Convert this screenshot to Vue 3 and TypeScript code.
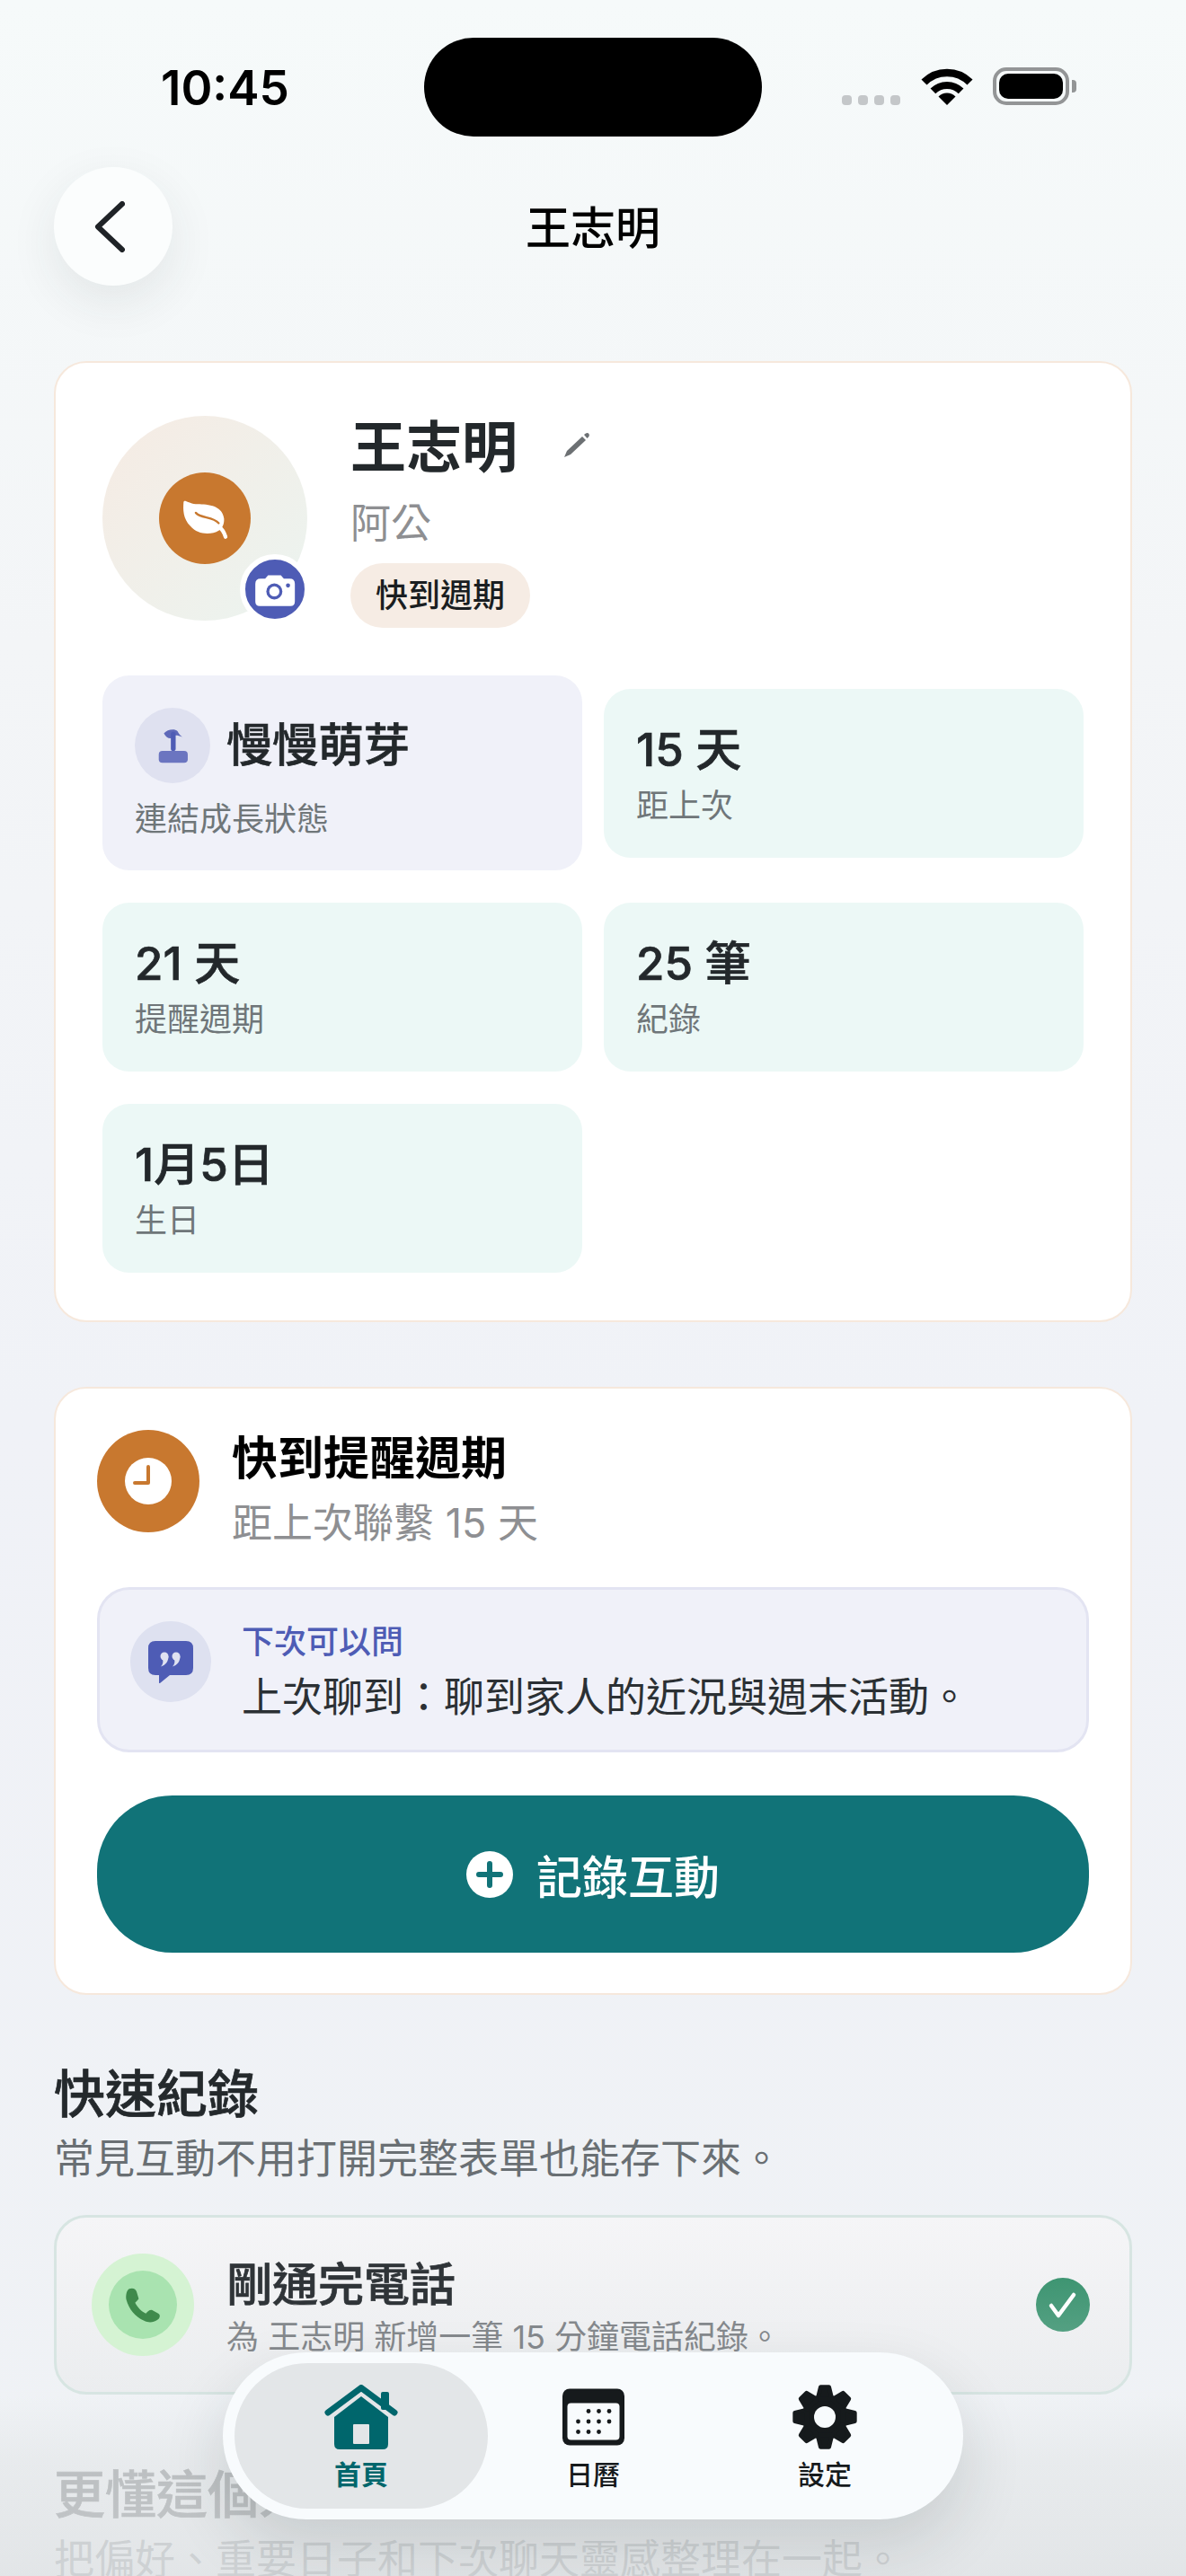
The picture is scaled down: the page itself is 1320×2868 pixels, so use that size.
<template>
  <div class="page">
    <div class="status">
      <span class="time">10:45</span>
      <div class="island"></div>
      <div class="status-right">
        <div class="dots"><i></i><i></i><i></i><i></i></div>
        <svg class="wifi" viewBox="0 0 58 42" fill="none" stroke="#000">
          <path d="M3.5 16.5A36 36 0 0 1 54.5 16.5" stroke-width="8.5" />
          <path d="M13.4 26.4A22 22 0 0 1 44.6 26.4" stroke-width="8" />
          <path d="M29 42L19.5 32.5A13.5 13.5 0 0 1 38.5 32.5Z" fill="#000" stroke="none" />
        </svg>
        <div class="battery"><div class="battery-fill"></div></div>
        <div class="battery-nub"></div>
      </div>
    </div>

    <header class="nav-head">
      <button class="back">
        <svg viewBox="0 0 34 57" width="34" height="57" fill="none" stroke="#1f2327" stroke-width="6" stroke-linecap="round" stroke-linejoin="round">
          <path d="M31 3L4 28.5L31 54" />
        </svg>
      </button>
      <h1 class="head-title">王志明</h1>
    </header>

    <main class="content">
      <section class="card profile">
        <div class="who">
          <div class="avatar">
            <div class="avatar-inner">
              <svg viewBox="60 70 160 140" width="53" height="47">
                <path d="M67 84C70 74 82 88 108 91C140 92 196 90 203 140C204 160 195 175 185 180C160 195 115 195 90 165C65 140 65 110 67 84Z" fill="#fff" />
                <path d="M108 120C125 140 165 132 185 155" fill="none" stroke="#c8782f" stroke-width="7" stroke-linecap="round" />
                <path d="M186 168C199 175 204 188 208 201" fill="none" stroke="#fff" stroke-width="13" stroke-linecap="round" />
              </svg>
            </div>
            <div class="camera">
              <svg viewBox="300 310 156 130" width="52" height="43">
                <path d="M330 338H345L355 327H398L408 338H428Q445 338 445 355V415Q445 430 430 430H327Q312 430 312 415V355Q312 338 330 338Z" fill="#fff" />
                <circle cx="376" cy="381" r="27" fill="#4e5cb5" />
                <circle cx="376" cy="381" r="17" fill="#fff" />
                <circle cx="422" cy="361" r="7" fill="#4e5cb5" />
              </svg>
            </div>
          </div>
          <div class="who-text">
            <div class="name-row">
              <span class="name">王志明</span>
              <svg class="pencil" viewBox="0 0 32 32" width="32" height="32" fill="none">
                <path d="M2 30L5 23L22 7L26 11L9 27Z" fill="#6c7073" />
                <path d="M24 5L26 3.5Q28 2.5 29.500 4Q30.500 6 29 7.500L27.500 9Z" fill="#6c7073" />
              </svg>
            </div>
            <div class="relation">阿公</div>
            <span class="pill">快到週期</span>
          </div>
        </div>

        <div class="stats">
          <div class="tile tile-growth">
            <div class="growth-row">
              <div class="growth-icon">
                <svg viewBox="100 120 110 125" width="37" height="42">
                  <path d="M125 142C135 130 160 125 170 135C175 145 180 150 186 154C175 150 165 148 160 150C150 165 135 160 125 142Z" fill="#5e69b9" />
                  <rect x="148" y="137" width="16" height="64" rx="8" fill="#4e5cb5" />
                  <rect x="108" y="200" width="96" height="40" rx="12" fill="#6b75c0" />
                </svg>
              </div>
              <span class="growth-title">慢慢萌芽</span>
            </div>
            <div class="tile-label">連結成長狀態</div>
          </div>
          <div v-for="s in stats" :key="s.label" class="tile">
            <div class="tile-value">{{ s.value }}</div>
            <div class="tile-label">{{ s.label }}</div>
          </div>
        </div>
      </section>

      <section class="card reminder">
        <div class="reminder-head">
          <div class="clock-circle">
            <svg viewBox="0 0 52 52" width="52" height="52">
              <circle cx="26" cy="26" r="26" fill="#fff" />
              <path d="M26 10V28H11" fill="none" stroke="#c8782f" stroke-width="4" stroke-linecap="round" stroke-linejoin="round" />
            </svg>
          </div>
          <div>
            <div class="reminder-title">快到提醒週期</div>
            <div class="reminder-sub">距上次聯繫 15 天</div>
          </div>
        </div>
        <div class="note">
          <div class="note-icon">
            <svg viewBox="0 0 50 47" width="50" height="47">
              <path d="M8 0H42Q50 0 50 8V30Q50 38 42 38H24L13 47Q12 47.500 12 46V38H8Q0 38 0 30V8Q0 0 8 0Z" fill="#4e5cb5" />
              <g fill="#dfe2f1">
                <circle cx="18" cy="17" r="4.500" />
                <circle cx="31" cy="17" r="4.500" />
                <path d="M22.500 17C22.500 23 19 27 14 28.500C16 26 17 24 16 20Z" />
                <path d="M35.500 17C35.500 23 32 27 27 28.500C29 26 30 24 29 20Z" />
              </g>
            </svg>
          </div>
          <div class="note-text">
            <div class="note-label">下次可以問</div>
            <div class="note-body">上次聊到：聊到家人的近況與週末活動。</div>
          </div>
        </div>
        <button class="log-btn">
          <svg viewBox="0 0 52 52" width="52" height="52">
            <circle cx="26" cy="26" r="26" fill="#fff" />
            <path d="M26 14V38M14 26H38" stroke="#117378" stroke-width="6" stroke-linecap="round" />
          </svg>
          <span>記錄互動</span>
        </button>
      </section>

      <section class="block">
        <h2 class="block-title">快速紀錄</h2>
        <p class="block-sub">常見互動不用打開完整表單也能存下來。</p>
        <div class="quick">
          <div class="phone-outer">
            <div class="phone-inner">
              <svg viewBox="110 135 135 130" width="45" height="43">
                <path d="M130 145C142 140 152 145 155 155L162 178C158 185 152 188 150 192C158 208 172 222 186 228C192 222 196 216 206 216L228 228C236 232 234 245 224 250C212 258 195 260 180 252C150 238 130 215 120 180C118 165 122 150 130 145Z" fill="#3f8a4c" />
              </svg>
            </div>
          </div>
          <div class="quick-text">
            <div class="quick-title">剛通完電話</div>
            <div class="quick-sub">為 王志明 新增一筆 15 分鐘電話紀錄。</div>
          </div>
          <div class="check">
            <svg viewBox="0 0 60 60" width="60" height="60" fill="none" stroke="#fff" stroke-width="4.500" stroke-linecap="round" stroke-linejoin="round">
              <path d="M17 31L25 42L42 19" />
            </svg>
          </div>
        </div>
      </section>

      <section class="block block-next">
        <h2 class="block-title">更懂這個人</h2>
        <p class="block-sub">把偏好、重要日子和下次聊天靈感整理在一起。</p>
      </section>
    </main>

    <div class="fade"></div>

    <nav class="tabbar">
      <div class="tab tab-active">
        <svg viewBox="0 0 82 72" width="82" height="72">
          <rect x="63" y="8" width="9" height="20" rx="2" fill="#00666c" />
          <path d="M41 13L71 36V66Q71 72 65 72H17Q11 72 11 66V36Z" fill="#00666c" />
          <path d="M4 31L41 3.500L78 31" fill="none" stroke="#00666c" stroke-width="7" stroke-linecap="round" stroke-linejoin="round" />
          <rect x="32" y="44" width="18" height="22" rx="1" fill="#e3e6e8" />
        </svg>
        <span>首頁</span>
      </div>
      <div class="tab">
        <svg viewBox="0 0 69 63" width="69" height="72">
          <rect width="69" height="63" rx="8" fill="#161a1c" />
          <rect x="5.500" y="16" width="58" height="41" rx="4" fill="#f8fbfd" />
          <circle v-for="d in calDots" :key="d[0] + '-' + d[1]" :cx="d[0]" :cy="d[1]" r="2.400" fill="#161a1c" />
        </svg>
        <span>日曆</span>
      </div>
      <div class="tab">
        <svg viewBox="-108 -108 216 216" width="72" height="72">
          <circle r="76" fill="#161a1c" />
          <path v-for="a in gearAngles" :key="a" d="M-14 -100H14L24 -60H-24Z" fill="#161a1c" stroke="#161a1c" stroke-width="14" stroke-linejoin="round" :transform="`rotate(${a})`" />
          <circle r="36" fill="#f8fbfd" />
        </svg>
        <span>設定</span>
      </div>
    </nav>
  </div>
</template>

<script setup lang="ts">
const stats = [
  { value: '15 天', label: '距上次' },
  { value: '21 天', label: '提醒週期' },
  { value: '25 筆', label: '紀錄' },
  { value: '1月5日', label: '生日' },
]

const calDots: number[][] = [
  [29, 25], [40.5, 25], [52, 25],
  [17.5, 36.5], [29, 36.5], [40.5, 36.5], [52, 36.5],
  [17.5, 48], [29, 48], [40.5, 48],
]

const gearAngles = [0, 45, 90, 135, 180, 225, 270, 315]
</script>

<style>
html,
body {
  margin: 0;
  background: #eff2f6;
}
</style>

<style scoped>
.page {
  position: relative;
  width: 1320px;
  height: 2868px;
  overflow: hidden;
  background: linear-gradient(180deg, #f6fafa 0%, #f3f5f7 25%, #f0f2f7 55%, #eff2f5 100%);
  font-family: Inter, "Noto Sans CJK TC", sans-serif;
  color: #23282b;
}

.status {
  display: grid;
  grid-template-columns: 472px 376px 1fr;
  height: 186px;
}
.time {
  padding: 70px 0 0 179px;
  font-size: 53px;
  line-height: 56px;
  font-weight: 600;
  color: #000;
}
.island {
  width: 376px;
  height: 110px;
  margin-top: 42px;
  border-radius: 55px;
  background: #000;
}
.status-right {
  display: flex;
  align-items: flex-start;
  padding-top: 75px;
}
.dots {
  display: flex;
  gap: 7px;
  margin: 31px 0 0 89px;
}
.dots i {
  width: 11px;
  height: 11px;
  border-radius: 4px;
  background: #c4c7c9;
}
.wifi {
  width: 58px;
  height: 42px;
  margin-left: 23px;
}
.battery {
  box-sizing: border-box;
  width: 85px;
  height: 42px;
  margin-left: 22px;
  padding: 3px;
  border: 4px solid #939596;
  border-radius: 15px;
}
.battery-fill {
  width: 100%;
  height: 100%;
  border-radius: 10px;
  background: #000;
}
.battery-nub {
  width: 5px;
  height: 14px;
  margin: 14px 0 0 3px;
  border-radius: 0 4px 4px 0;
  background: #939596;
}

.nav-head {
  position: relative;
  display: flex;
  align-items: center;
  justify-content: center;
  height: 132px;
  margin-bottom: 84px;
}
.back {
  position: absolute;
  left: 60px;
  top: 0;
  display: flex;
  align-items: center;
  justify-content: center;
  width: 132px;
  height: 132px;
  padding: 0 8px 0 0;
  border: 0;
  border-radius: 50%;
  background: #fbfdfd;
  box-shadow: 0 18px 54px rgba(40, 50, 60, 0.09);
}
.head-title {
  margin: 4px 0 0;
  font-size: 50px;
  line-height: 64px;
  font-weight: 500;
  color: #000;
}

.content {
  padding: 0 60px;
}
.card {
  box-sizing: border-box;
  width: 1200px;
  border: 2px solid #f6e8dc;
  border-radius: 36px;
  background: #fff;
}

.profile {
  padding: 59px 52px 53px;
}
.who {
  display: flex;
  gap: 48px;
}
.avatar {
  position: relative;
  display: flex;
  align-items: center;
  justify-content: center;
  width: 228px;
  height: 228px;
  border-radius: 50%;
  background: linear-gradient(135deg, #f6ebe3, #ebf4f0);
}
.avatar-inner {
  display: flex;
  align-items: center;
  justify-content: center;
  width: 102px;
  height: 102px;
  border-radius: 50%;
  background: #c8782f;
}
.camera {
  position: absolute;
  right: -3px;
  bottom: -4px;
  display: flex;
  align-items: center;
  justify-content: center;
  box-sizing: border-box;
  width: 78px;
  height: 78px;
  border: 6px solid #fff;
  border-radius: 50%;
  background: #4e5cb5;
}
.name-row {
  display: flex;
  align-items: center;
  gap: 50px;
  height: 72px;
}
.name {
  font-size: 62px;
  line-height: 72px;
  font-weight: 700;
}
.pencil {
  margin-top: -8px;
}
.relation {
  margin-top: 20px;
  font-size: 45px;
  line-height: 56px;
  color: #8e8f92;
}
.pill {
  display: inline-block;
  margin-top: 16px;
  padding: 0 28px;
  border-radius: 36px;
  background: #f6ece4;
  font-size: 36px;
  line-height: 72px;
  font-weight: 500;
  color: #1a1e21;
}

.stats {
  display: grid;
  grid-template-columns: 534px 534px;
  gap: 36px 24px;
  align-items: center;
  margin-top: 53px;
}
.tile {
  box-sizing: border-box;
  height: 188px;
  padding: 36px;
  border-radius: 30px;
  background: #ecf8f6;
}
.tile-growth {
  height: 217px;
  background: #f0f1f9;
}
.growth-row {
  display: flex;
  align-items: center;
  gap: 18px;
}
.growth-icon {
  display: flex;
  align-items: center;
  justify-content: center;
  width: 84px;
  height: 84px;
  border-radius: 50%;
  background: #dfe1f0;
}
.growth-title {
  font-size: 51px;
  line-height: 64px;
  font-weight: 500;
  -webkit-text-stroke: 0.7px currentColor;
}
.tile-growth .tile-label {
  margin-top: 16px;
}
.tile-value {
  font-size: 51px;
  line-height: 64px;
  font-weight: 500;
  -webkit-text-stroke: 0.7px currentColor;
}
.tile-label {
  margin-top: 6px;
  font-size: 36px;
  line-height: 48px;
  color: #6f7679;
}

.reminder {
  margin-top: 72px;
  padding: 46px 46px 45px;
}
.reminder-head {
  display: flex;
  gap: 36px;
}
.clock-circle {
  display: flex;
  align-items: center;
  justify-content: center;
  width: 114px;
  height: 114px;
  border-radius: 50%;
  background: #c8782f;
}
.reminder-title {
  font-size: 51px;
  line-height: 64px;
  font-weight: 700;
  color: #000;
}
.reminder-sub {
  margin-top: 12px;
  font-size: 45px;
  line-height: 56px;
  color: #8e8f92;
}
.note {
  display: flex;
  gap: 34px;
  box-sizing: border-box;
  height: 184px;
  margin-top: 43px;
  padding: 35px 34px;
  border: 3px solid #e3e4f2;
  border-radius: 36px;
  background: #f0f1f9;
}
.note-icon {
  display: flex;
  align-items: center;
  justify-content: center;
  flex: none;
  width: 90px;
  height: 90px;
  border-radius: 50%;
  background: #dee1f0;
}
.note-text {
  margin-top: -1px;
}
.note-label {
  font-size: 36px;
  line-height: 48px;
  font-weight: 500;
  color: #4e5cb5;
}
.note-body {
  margin-top: 8px;
  font-size: 45px;
  line-height: 60px;
  color: #2b3034;
}
.log-btn {
  display: flex;
  align-items: center;
  justify-content: center;
  gap: 26px;
  width: 1104px;
  height: 175px;
  margin-top: 48px;
  padding: 0;
  border: 0;
  border-radius: 84px;
  background: #117378;
  color: #fff;
  font: inherit;
  font-size: 51px;
  font-weight: 500;
}

.block {
  margin-top: 75px;
}
.block-title {
  margin: 0;
  font-size: 57px;
  line-height: 72px;
  font-weight: 500;
  -webkit-text-stroke: 0.7px currentColor;
  color: #24292c;
}
.block-sub {
  margin: 8px 0 0;
  font-size: 45px;
  line-height: 56px;
  color: #696f73;
}
.quick {
  display: flex;
  align-items: center;
  box-sizing: border-box;
  width: 1200px;
  height: 200px;
  margin-top: 34px;
  padding: 0 44px 0 39px;
  border: 3px solid #d7e5e2;
  border-radius: 36px;
  background: linear-gradient(180deg, #f5f5f7, #ebedef);
}
.phone-outer {
  display: flex;
  align-items: center;
  justify-content: center;
  flex: none;
  width: 114px;
  height: 114px;
  border-radius: 50%;
  background: #d5f3d3;
}
.phone-inner {
  display: flex;
  align-items: center;
  justify-content: center;
  width: 76px;
  height: 76px;
  border-radius: 50%;
  background: #a9e3b0;
}
.quick-text {
  flex: 1;
  margin: 6px 0 0 36px;
}
.quick-title {
  font-size: 51px;
  line-height: 64px;
  font-weight: 500;
  -webkit-text-stroke: 0.7px currentColor;
  color: #2f3438;
}
.quick-sub {
  margin-top: 2px;
  font-size: 36px;
  line-height: 48px;
  color: #85898d;
}
.check {
  width: 60px;
  height: 60px;
  border-radius: 50%;
  background: linear-gradient(180deg, #3e9572, #54a082);
}
.block-next {
  margin-top: 76px;
}

.fade {
  position: absolute;
  left: 0;
  right: 0;
  bottom: 0;
  height: 200px;
  background: linear-gradient(180deg, rgba(232, 235, 237, 0) 0%, rgba(230, 233, 235, 0.78) 35%, rgba(224, 227, 229, 0.85) 100%);
  pointer-events: none;
}

.tabbar {
  position: absolute;
  left: 248px;
  top: 2619px;
  display: grid;
  grid-template-columns: 282px 234px 282px;
  box-sizing: border-box;
  width: 824px;
  height: 186px;
  padding: 12px 13px;
  border-radius: 93px;
  background: #f8fbfd;
  box-shadow: 0 30px 70px rgba(30, 40, 45, 0.14);
}
.tab {
  display: flex;
  flex-direction: column;
  align-items: center;
  padding-top: 24px;
  border-radius: 81px;
  font-size: 30px;
  line-height: 40px;
  font-weight: 500;
  color: #161a1c;
}
.tab span {
  margin-top: 8px;
}
.tab-active {
  background: #e3e6e8;
  color: #00666c;
  font-weight: 700;
}
</style>
